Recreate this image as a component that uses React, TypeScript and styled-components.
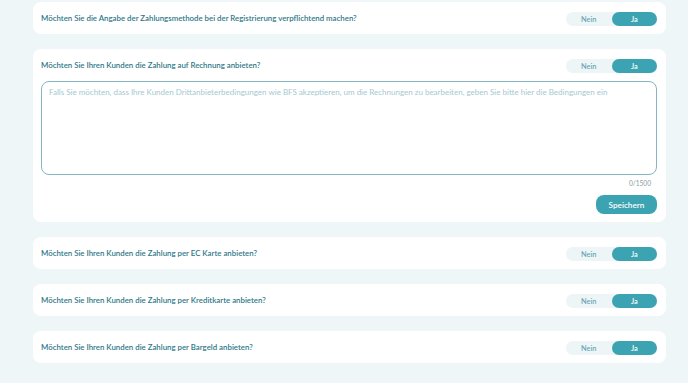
import { useState } from "react";
import styled, { createGlobalStyle } from "styled-components";

const GlobalStyle = createGlobalStyle`
    body {
        margin: 0;
        background: #eff6f8;
        font-family: "Lato", "Open Sans", sans-serif;
    }
`

const Page = styled.main`
    display: flex;
    flex-direction: column;
    gap: 15px;
    width: 633px;
    padding: 2px 0 0 33px;
    box-sizing: content-box;
`

const Card = styled.section`
    display: flex;
    flex-direction: column;
    background: #ffffff;
    border-radius: 8px;
    padding: 8px 9px 8px 8px;
`

const Row = styled.div`
    display: flex;
    align-items: center;
    justify-content: space-between;
    height: 16px;
`

const Question = styled.span`
    color: #2f7888;
    font-size: 7.85px;
    font-weight: 600;
    letter-spacing: 0;
`

const Toggle = styled.div`
    display: flex;
    width: 91px;
    height: 14px;
    border-radius: 7px;
    background: #edf5f7;
    margin-top: 2px;
`

const ToggleOption = styled.button<{ $active?: boolean }>`
    flex: 1;
    border: none;
    padding: 0;
    border-radius: 7px;
    font-family: inherit;
    font-size: 7.4px;
    font-weight: 600;
    cursor: pointer;
    color: ${props => (props.$active ? "#ffffff" : "#6aa7b4")};
    background: ${props => (props.$active ? "#3ba3b1" : "transparent")};
`

const TextArea = styled.textarea`
    margin-top: 8px;
    height: 94px;
    box-sizing: border-box;
    resize: none;
    border: 1.3px solid #83b6c0;
    border-radius: 8px;
    padding: 5px 7px;
    font-family: inherit;
    font-size: 8px;
    color: #2f7888;
    outline: none;

    &::placeholder {
        color: #a6c9cf;
    }
`

const Counter = styled.div`
    align-self: flex-end;
    margin: 3px 6px 0 0;
    font-size: 6.6px;
    line-height: 10px;
    color: #8a9ca0;
`

const SaveButton = styled.button`
    align-self: flex-end;
    margin-top: 7px;
    width: 61px;
    height: 19px;
    border: none;
    border-radius: 8px;
    background: #3ba3b1;
    color: #ffffff;
    font-family: inherit;
    font-size: 8.2px;
    font-weight: 600;
    cursor: pointer;
`

function YesNo() {
    const [yes, setYes] = useState<boolean>(true);
    return (
        <Toggle>
            <ToggleOption $active={!yes} onClick={() => setYes(false)}>Nein</ToggleOption>
            <ToggleOption $active={yes} onClick={() => setYes(true)}>Ja</ToggleOption>
        </Toggle>
    )
}

export default function App() {
    const [terms, setTerms] = useState<string>("");

    return (
        <>
            <GlobalStyle />
            <Page>
                <Card>
                    <Row>
                        <Question>Möchten Sie die Angabe der Zahlungsmethode bei der Registrierung verpflichtend machen?</Question>
                        <YesNo />
                    </Row>
                </Card>
                <Card>
                    <Row>
                        <Question>Möchten Sie Ihren Kunden die Zahlung auf Rechnung anbieten?</Question>
                        <YesNo />
                    </Row>
                    <TextArea
                        value={terms}
                        maxLength={1500}
                        onChange={e => setTerms(e.target.value)}
                        placeholder="Falls Sie möchten, dass Ihre Kunden Drittanbieterbedingungen wie BFS akzeptieren, um die Rechnungen zu bearbeiten, geben Sie bitte hier die Bedingungen ein"
                    />
                    <Counter>{terms.length}/1500</Counter>
                    <SaveButton>Speichern</SaveButton>
                </Card>
                <Card>
                    <Row>
                        <Question>Möchten Sie Ihren Kunden die Zahlung per EC Karte anbieten?</Question>
                        <YesNo />
                    </Row>
                </Card>
                <Card>
                    <Row>
                        <Question>Möchten Sie Ihren Kunden die Zahlung per Kreditkarte anbieten?</Question>
                        <YesNo />
                    </Row>
                </Card>
                <Card>
                    <Row>
                        <Question>Möchten Sie Ihren Kunden die Zahlung per Bargeld anbieten?</Question>
                        <YesNo />
                    </Row>
                </Card>
            </Page>
        </>
    )
}
